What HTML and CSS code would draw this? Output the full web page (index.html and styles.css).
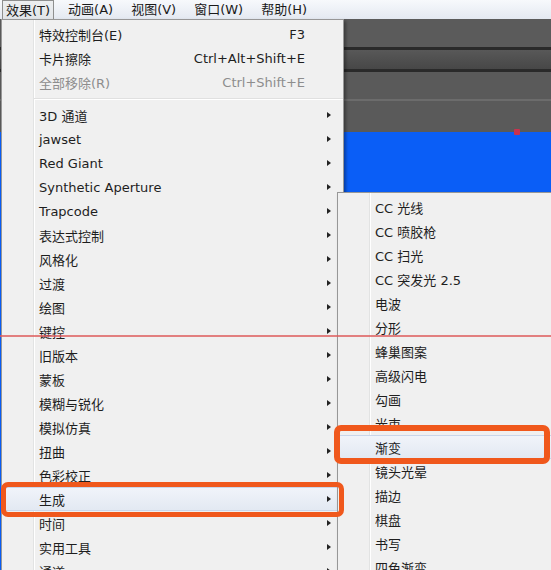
FILE: index.html
```html
<!DOCTYPE html>
<html lang="zh-CN">
<head>
    <meta charset="UTF-8">
    <title>效果菜单</title>
    <link rel="stylesheet" href="styles.css">
</head>
<body>
    <div class="app">
        <!-- top menu bar -->
        <div class="menubar">
            <span class="bar-item active">效果(T)</span>
            <span class="bar-item">动画(A)</span>
            <span class="bar-item">视图(V)</span>
            <span class="bar-item">窗口(W)</span>
            <span class="bar-item">帮助(H)</span>
        </div>

        <!-- dark panels behind the menus -->
        <div class="workspace">
            <div class="band band-a"></div>
            <div class="rule rule-dark"></div>
            <div class="band band-b"></div>
            <div class="rule rule-dark"></div>
            <div class="band band-c"></div>
            <div class="rule rule-light"></div>
            <div class="band band-d"><span class="keyframe"></span></div>
            <div class="band band-blue"></div>
        </div>

        <!-- Effect menu -->
        <div class="menu main-menu">
            <div class="item"><span class="label">特效控制台(E)</span><span class="key">F3</span></div>
            <div class="item"><span class="label">卡片擦除</span><span class="key">Ctrl+Alt+Shift+E</span></div>
            <div class="item disabled"><span class="label">全部移除(R)</span><span class="key">Ctrl+Shift+E</span></div>
            <div class="separator"></div>
            <div class="item sub"><span class="label">3D 通道</span></div>
            <div class="item sub"><span class="label">jawset</span></div>
            <div class="item sub"><span class="label">Red Giant</span></div>
            <div class="item sub"><span class="label">Synthetic Aperture</span></div>
            <div class="item sub"><span class="label">Trapcode</span></div>
            <div class="item sub"><span class="label">表达式控制</span></div>
            <div class="item sub"><span class="label">风格化</span></div>
            <div class="item sub"><span class="label">过渡</span></div>
            <div class="item sub"><span class="label">绘图</span></div>
            <div class="item sub"><span class="label">键控</span></div>
            <div class="item sub"><span class="label">旧版本</span></div>
            <div class="item sub"><span class="label">蒙板</span></div>
            <div class="item sub"><span class="label">模糊与锐化</span></div>
            <div class="item sub"><span class="label">模拟仿真</span></div>
            <div class="item sub"><span class="label">扭曲</span></div>
            <div class="item sub"><span class="label">色彩校正</span></div>
            <div class="item sub hover"><span class="label">生成</span></div>
            <div class="item sub"><span class="label">时间</span></div>
            <div class="item sub"><span class="label">实用工具</span></div>
            <div class="item sub"><span class="label">通道</span></div>
        </div>

        <!-- Generate submenu -->
        <div class="menu sub-menu">
            <div class="item"><span class="label">CC 光线</span></div>
            <div class="item"><span class="label">CC 喷胶枪</span></div>
            <div class="item"><span class="label">CC 扫光</span></div>
            <div class="item"><span class="label">CC 突发光 2.5</span></div>
            <div class="item"><span class="label">电波</span></div>
            <div class="item"><span class="label">分形</span></div>
            <div class="item"><span class="label">蜂巢图案</span></div>
            <div class="item"><span class="label">高级闪电</span></div>
            <div class="item"><span class="label">勾画</span></div>
            <div class="item"><span class="label">光束</span></div>
            <div class="item hover"><span class="label">渐变</span></div>
            <div class="item"><span class="label">镜头光晕</span></div>
            <div class="item"><span class="label">描边</span></div>
            <div class="item"><span class="label">棋盘</span></div>
            <div class="item"><span class="label">书写</span></div>
            <div class="item"><span class="label">四色渐变</span></div>
        </div>

        <!-- annotations drawn on the screenshot -->
        <div class="mark-line"></div>
        <div class="mark-box box-generate"></div>
        <div class="mark-box box-ramp"></div>
    </div>
</body>
</html>
```

FILE: styles.css
```css
body {
    margin: 0;
    font-family: "DejaVu Sans", "Noto Sans CJK SC", sans-serif;
    font-size: 13px;
    color: #1e1e1e;
    background: #5a5a5a;
}

.app {
    position: relative;
    width: 551px;
    height: 570px;
    overflow: hidden;
    display: flex;
    flex-direction: column;
}

/* menu bar */
.menubar {
    display: flex;
    align-items: center;
    height: 19px;
    padding-left: 2px;
    gap: 10px;
    background: linear-gradient(#f7f9fc, #e4e9f1);
    flex-shrink: 0;
}

.bar-item {
    display: flex;
    align-items: center;
    height: 19px;
    padding: 0 4px;
    box-sizing: border-box;
    line-height: 1;
    color: #1a1a1a;
}

.bar-item.active {
    border: 1px solid #8e8f8f;
    border-bottom: none;
    background: linear-gradient(#eceef0, #e2e5e9);
    padding: 0 3px;
}

/* background panels */
.workspace {
    flex: 1;
    display: flex;
    flex-direction: column;
}

.band-a { height: 28px; background: #5b5b5b; }
.band-b { height: 19px; background: linear-gradient(#585858, #474747); }
.band-c { height: 27px; background: #5a5a5a; }
.band-d { height: 31px; background: #5a5a5a; position: relative; }
.band-blue { flex: 1; background: #0a5ef7; }

.rule-dark { height: 3px; background: #2a2a2a; }
.rule-light { height: 2px; background: #6c6c6c; }

.keyframe {
    position: absolute;
    left: 514px;
    bottom: -3px;
    width: 6px;
    height: 6px;
    border-radius: 1px;
    background: #c8324e;
}

/* menus */
.menu {
    position: absolute;
    box-sizing: border-box;
    padding: 2px 0;
    background-color: #f0f0f0;
    background-image: linear-gradient(to right, transparent 31px, #e2e3e3 31px, #e2e3e3 32px, #ffffff 32px, #ffffff 33px, transparent 33px);
    border: 1px solid #979797;
    box-shadow: 2px 2px 3px rgba(0, 0, 0, 0.35);
}

.main-menu {
    left: 1px;
    top: 19px;
    width: 343px;
    height: 600px;
}

.sub-menu {
    left: 337px;
    top: 192px;
    width: 240px;
    height: 420px;
}

.item {
    position: relative;
    display: flex;
    align-items: center;
    height: 24px;
    padding-left: 37px;
    padding-right: 38px;
    white-space: nowrap;
}

.item .key {
    margin-left: auto;
}

.item.disabled {
    color: #8d8d8d;
}

.item.sub::after {
    content: "";
    position: absolute;
    right: 12px;
    top: 9px;
    border-left: 4px solid #222;
    border-top: 3.5px solid transparent;
    border-bottom: 3.5px solid transparent;
}

.item.hover {
    background: linear-gradient(#f1f4fa, #e2e8f2);
    box-shadow: inset 0 0 0 1px #c9d6ea;
    border-radius: 2px;
}

.separator {
    height: 9px;
    margin-left: 32px;
    background: linear-gradient(transparent 4px, #e0e0e0 4px, #e0e0e0 5px, #fff 5px, #fff 6px, transparent 6px);
}

/* annotations */
.mark-line {
    position: absolute;
    left: 0;
    top: 335px;
    width: 551px;
    height: 2px;
    background: rgba(222, 90, 90, 0.75);
}

.mark-box {
    position: absolute;
    box-sizing: border-box;
    border: 5px solid #f0581c;
    border-radius: 7px;
}

.box-generate {
    left: 1px;
    top: 482px;
    width: 343px;
    height: 35px;
}

.box-ramp {
    left: 334px;
    top: 425px;
    width: 216px;
    height: 39px;
    border-width: 6px;
}
```
